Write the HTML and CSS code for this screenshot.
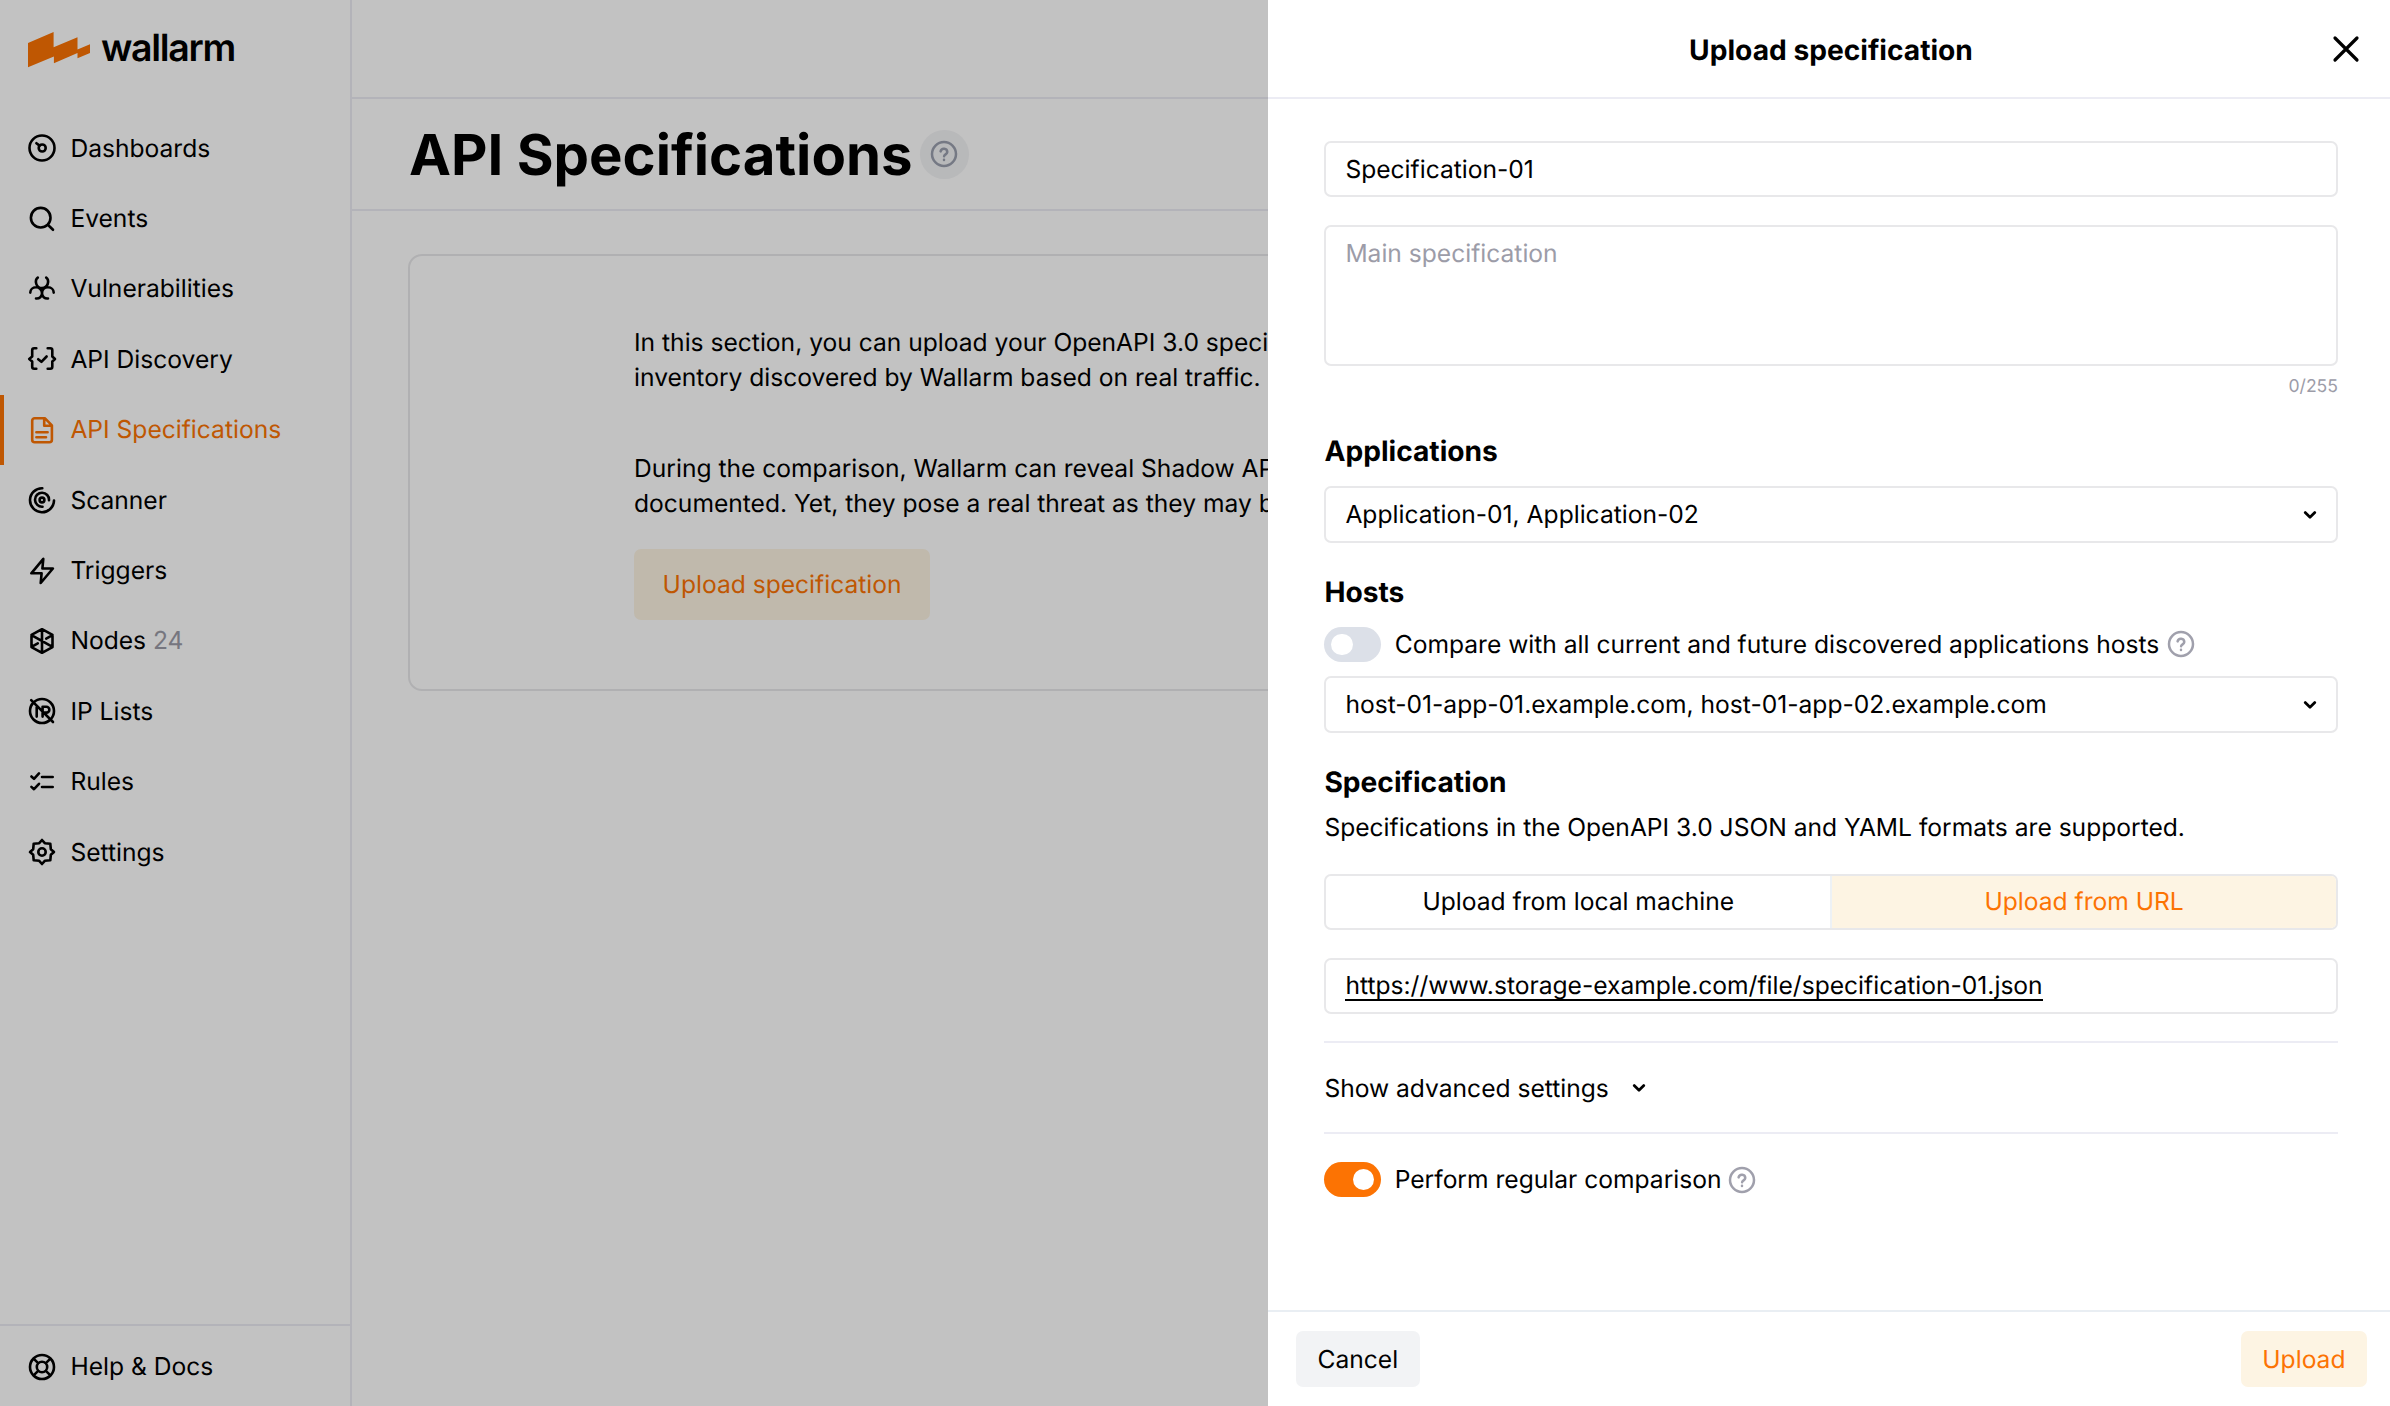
FILE: index.html
```
<!DOCTYPE html>
<html lang="en">
<head>
<meta charset="utf-8">
<title>API Specifications</title>
<link rel="stylesheet" href="styles.css">
</head>
<body>
<svg class="defs" aria-hidden="true">
  <symbol id="help" viewBox="0 0 28 28"><circle cx="14" cy="14" r="12"/><path d="M10.600 11.400a3.400 3.400 0 0 1 6.700.7c0 2.100-3.200 2.400-3.200 4.200"/><path d="M14 19.800v.1"/></symbol>
  <symbol id="chevron" viewBox="0 0 16 16"><path d="M3.200 5.600 8 10.200l4.800-4.600"/></symbol>
</svg>
<div class="app">
  <aside class="sidebar">
    <div class="logo">
      <svg class="logo-mark" viewBox="0 0 62 36"><path d="M0 11 25.600 0V15.300L49.500 5.300V17.500L62 12.200V21L49.500 26.300V21L25.900 31.200V24.500L0 35.300Z"/></svg>
      <span class="logo-text">wallarm</span>
    </div>
    <nav class="nav">
      <a class="nav-item"><svg class="icon" viewBox="0 0 32 32"><circle cx="16" cy="16" r="12.500"/><circle cx="16.200" cy="16" r="3.500"/><path d="m10.400 11.200 3.200 2.400"/></svg>Dashboards</a>
      <a class="nav-item"><svg class="icon" viewBox="0 0 32 32"><circle cx="14.700" cy="14.700" r="9.800"/><path d="m21.800 21.800 5.200 5"/></svg>Events</a>
      <a class="nav-item"><svg class="icon" viewBox="0 0 32 32"><path d="M11.800 4.600C9.800 6 9.700 9 10.300 11c.8 2.600 3 4 5.700 4s4.900-1.400 5.700-4c.6-2 .5-5-1.500-6.400M4.300 19.600c0-3 2.400-5.300 5.700-5.300 3.600 0 6 2.600 6 6 0 3-2.500 5.600-6 5.200M27.700 19.600c0-3-2.400-5.300-5.700-5.300-3.600 0-6 2.600-6 6 0 3 2.500 5.600 6 5.200"/></svg>Vulnerabilities</a>
      <a class="nav-item"><svg class="icon" viewBox="0 0 32 32"><path d="M10.300 5.300H8.200a2 2 0 0 0-2 2v6.200L3.200 16l3 2.500v5.200a2 2 0 0 0 2 2h2.100M21.700 5.300h2.600a2 2 0 0 1 2 2v6.200l2.700 2.500-2.700 2.500v5.200a2 2 0 0 1-2 2h-2.600M12.200 16.200l3.200 2.600 5.200-5.300"/></svg>API Discovery</a>
      <a class="nav-item active"><svg class="icon" viewBox="0 0 32 32"><path d="M8.700 4.200h10.100l7.100 7.100v14.400a2.500 2.500 0 0 1-2.500 2.500H8.700a2.500 2.500 0 0 1-2.500-2.500v-19a2.500 2.500 0 0 1 2.500-2.500ZM18.200 4.800v7h7M10.400 18.300h11.200M10.400 23.200h9.600"/></svg>API Specifications</a>
      <a class="nav-item"><svg class="icon" viewBox="0 0 32 32"><path d="M16.300 4.200A12 12 0 1 0 28 16.600M16.500 22.700A7 7 0 1 1 23 16.200"/><circle cx="16" cy="16" r="2.400"/></svg>Scanner</a>
      <a class="nav-item"><svg class="icon" viewBox="0 0 32 32"><path d="M17.300 3.800 5.300 18.300H15.600L14.700 28 26.900 13.500H16.400Z"/></svg>Triggers</a>
      <a class="nav-item"><svg class="icon" viewBox="0 0 32 32"><path d="M16 4.200 26.500 9.900V22.100L16 27.800 5.500 22.100V9.900ZM16 4.200v23.600M5.500 10.200l21 11.600M20.200 13.700l6.300-3.500M5.500 21.800l6.300-3.500"/></svg>Nodes <span class="count">24</span></a>
      <a class="nav-item"><svg class="icon" viewBox="0 0 32 32"><circle cx="16" cy="16" r="12"/><path d="M5.200 5.200 27 27M10.700 12v9.600M16.600 21.600V11.700h3.800a2.900 2.900 0 0 1 0 5.900h-3.600"/></svg>IP Lists</a>
      <a class="nav-item"><svg class="icon" viewBox="0 0 32 32"><path d="m5.400 10.500 2.600 2.300 5-5.400M5.400 20.900l2.600 2.300 5-5.400M16 11h10.700M16 21h10.700"/></svg>Rules</a>
      <a class="nav-item"><svg class="icon" viewBox="0 0 32 32"><circle cx="16" cy="16" r="3.700"/><path d="M16 4 18.800 7.200 24.300 7.700 24.800 13.200 28 16 24.800 18.800 24.300 24.300 18.800 24.800 16 28 13.200 24.800 7.700 24.300 7.200 18.800 4 16 7.200 13.200 7.700 7.700 13.200 7.200Z"/></svg>Settings</a>
    </nav>
    <a class="nav-item help-docs"><svg class="icon" viewBox="0 0 32 32"><circle cx="16" cy="16" r="12"/><circle cx="16" cy="16" r="5.200"/><path d="m7.800 7.800 4.400 4.400M19.800 19.800l4.400 4.400M24.200 7.800l-4.400 4.400M12.200 19.800l-4.400 4.400"/></svg>Help &amp; Docs</a>
  </aside>
  <main class="main">
    <div class="topbar"></div>
    <header class="page-head">
      <h1>API Specifications</h1>
      <span class="help-badge"><svg class="help"><use href="#help"/></svg></span>
    </header>
    <section class="card">
      <p>In this section, you can upload your OpenAPI 3.0 specification<br>inventory discovered by Wallarm based on real traffic.</p>
      <p>During the comparison, Wallarm can reveal Shadow APIs<br>documented. Yet, they pose a real threat as they may be</p>
      <button class="btn soft large">Upload specification</button>
    </section>
  </main>
</div>
<div class="overlay"></div>
<div class="drawer">
  <header class="drawer-head">
    <h2>Upload specification</h2>
    <svg class="close" viewBox="0 0 28 28"><path d="m3 3 22 22M25 3 3 25"/></svg>
  </header>
  <div class="drawer-body">
    <div class="field name">Specification-01</div>
    <div class="field area">Main specification</div>
    <div class="counter">0/255</div>
    <h3>Applications</h3>
    <div class="field select apps">Application-01, Application-02<svg class="chevron"><use href="#chevron"/></svg></div>
    <h3>Hosts</h3>
    <div class="toggle-row hosts-toggle"><span class="toggle"></span>Compare with all current and future discovered applications hosts<svg class="help"><use href="#help"/></svg></div>
    <div class="field select hosts">host-01-app-01.example.com, host-01-app-02.example.com<svg class="chevron"><use href="#chevron"/></svg></div>
    <h3>Specification</h3>
    <p class="hint">Specifications in the OpenAPI 3.0 JSON and YAML formats are supported.</p>
    <div class="segmented"><span class="seg">Upload from local machine</span><span class="seg selected">Upload from URL</span></div>
    <div class="field url"><span class="link">https://www.storage-example.com/file/specification-01.json</span></div>
    <div class="advanced">Show advanced settings<svg class="chevron"><use href="#chevron"/></svg></div>
    <div class="toggle-row compare"><span class="toggle on"></span>Perform regular comparison<svg class="help"><use href="#help"/></svg></div>
  </div>
  <footer class="drawer-foot">
    <button class="btn plain">Cancel</button>
    <button class="btn soft">Upload</button>
  </footer>
</div>
</body>
</html>
```
FILE: styles.css
```
* { box-sizing: border-box; }
body {
  margin: 0;
  width: 2390px;
  height: 1406px;
  overflow: hidden;
  position: relative;
  background: #fff;
  color: #000;
  font: 400 24.6px/35.2px Inter, "Liberation Sans", sans-serif;
  text-rendering: geometricPrecision;
}
h1, h2, h3, p { margin: 0; }
h2, h3 { font-size: 28.16px; line-height: 42px; font-weight: 700; }
svg { flex: none; fill: none; stroke: currentColor; stroke-linecap: round; stroke-linejoin: round; }
.defs { position: absolute; width: 0; height: 0; }

.app { display: flex; height: 1406px; }
.sidebar {
  flex: none;
  width: 352px;
  display: flex;
  flex-direction: column;
  border-right: 2px solid #ececf4;
}
.logo { display: flex; align-items: flex-start; height: 113px; padding: 32px 0 0 28px; }
.logo-mark { width: 62px; height: 36px; fill: #fc7303; stroke: none; }
.logo-text { margin: -1px 0 0 11px; font-size: 37.500px; line-height: 36px; font-weight: 600; letter-spacing: -1.300px; }
.nav { flex: 1; }
.nav-item { display: flex; align-items: center; height: 70.4px; padding-left: 26px; white-space: pre; }
.icon { width: 32px; height: 32px; margin-right: 12.400px; stroke-width: 2.6; }
.active { color: #fc7303; box-shadow: inset 4px 0 #fc7303; }
.count { color: #9c9ca8; }
.help-docs { height: 82px; padding-top: 1px; border-top: 2px solid #ececf4; }

.main { flex: 1; min-width: 0; }
.topbar { height: 98.500px; border-bottom: 2px solid #ececf4; }
.page-head { display: flex; align-items: center; height: 112.500px; padding: 1px 0 0 57px; border-bottom: 2px solid #ececf4; }
h1 { padding-top: 2px; font-size: 56.32px; line-height: 70px; font-weight: 700; }
.help-badge { display: flex; align-items: center; justify-content: center; width: 49px; height: 49px; margin-left: 7px; border-radius: 50%; background: #f2f3f5; color: #9a9fae; }
.help { width: 28px; height: 28px; stroke-width: 2.5; }
.card { width: 1900px; height: 437px; margin: 42.500px 0 0 56px; padding: 69px 224px; border: 2px solid #e8e8ea; border-radius: 14px; white-space: nowrap; }
.card p { margin-bottom: 56px; }
.card p + p { margin-bottom: 27.500px; }

.btn { height: 56px; padding: 1px 21.500px 0; border: 0; border-radius: 7px; font: inherit; color: #000; text-rendering: inherit; }
.soft { background: #fdf4e3; color: #fc7303; }
.plain { background: #f2f3f5; }
.large { display: block; height: 71px; padding: 1px 28.600px 0; }

.overlay { position: absolute; inset: 0; background: rgba(0, 0, 0, .24); }
.drawer { position: absolute; inset: 0 0 0 1268px; display: flex; flex-direction: column; background: #fff; }
.drawer-head { display: flex; align-items: center; height: 98.500px; padding: 2px 30px 0 0; border-bottom: 2px solid #ececf4; }
.drawer-head h2 { flex: 1; margin-left: 62px; padding-top: 1px; text-align: center; }
.close { width: 28px; height: 28px; stroke-width: 3.2; }
.drawer-body { flex: 1; padding: 42.500px 52px 0 56.400px; }
.field { display: flex; align-items: center; height: 56.300px; padding: 0 19px; border: 2px solid #e8e8ea; border-radius: 7px; }
.area { align-items: flex-start; height: 141px; margin-top: 28px; padding-top: 9px; color: #9c9ca8; }
.counter { margin-top: 7.500px; text-align: right; font-size: 17.600px; line-height: 26px; color: #9c9ca8; }
.counter + h3 { margin-top: 30.600px; }
.select { justify-content: space-between; }
.chevron { width: 16px; height: 16px; stroke-width: 2.8; }
.apps { margin-top: 14px; }
.apps .chevron, .hosts .chevron { margin-right: -1px; }
.apps + h3, .hosts + h3 { margin-top: 28.200px; }
.toggle-row { display: flex; align-items: center; height: 35.200px; }
.hosts-toggle { margin-top: 14px; }
.toggle { flex: none; width: 56.300px; height: 35.200px; margin-right: 14px; padding: 7px; border-radius: 18px; background: #dce0e8; }
.toggle::before { content: ""; display: block; width: 21.200px; height: 21.200px; border-radius: 50%; background: #fff; }
.toggle.on { background: #fc7303; }
.toggle.on::before { margin-left: auto; }
.toggle-row .help { margin-left: 8px; color: #a0a0ac; }
.compare .help { margin-left: 6.500px; }
.hosts { margin-top: 14.300px; }
.hint { margin-top: 7.500px; }
.segmented { display: flex; height: 56.300px; margin-top: 28px; border: 2px solid #e8e8ea; border-radius: 7px; overflow: hidden; }
.seg { flex: 1; display: flex; align-items: center; justify-content: center; }
.selected { background: #fdf4e3; color: #fc7303; border-left: 2px solid #edf1f5; }
.url { margin-top: 28px; padding-top: 1px; }
.link { line-height: 28px; border-bottom: 2px solid #000; }
.advanced { display: flex; align-items: center; gap: 22.500px; height: 93px; margin-top: 27px; padding-top: 1px; border: solid #ececf4; border-width: 2px 0; }
.compare { margin-top: 28px; }
.drawer-foot { display: flex; align-items: flex-start; justify-content: space-between; height: 96.500px; padding: 19.500px 23px 0 28px; border-top: 2px solid #e9eef3; }
```
